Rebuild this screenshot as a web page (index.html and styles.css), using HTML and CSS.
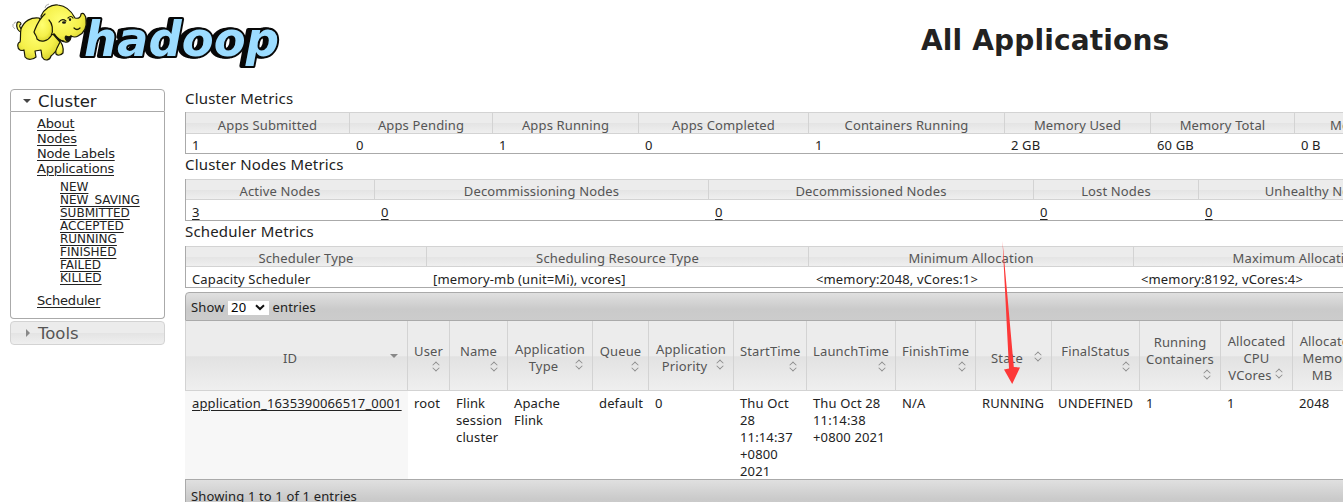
FILE: index.html
```html
<!DOCTYPE html>
<html lang="en">
<head>
<meta charset="utf-8">
<title>All Applications</title>
<link rel="stylesheet" href="styles.css">
</head>
<body>
<header class="top">
  <svg class="logo" width="285" height="76" viewBox="0 0 285 76">
    <defs>
      <radialGradient id="skin" cx="45%" cy="40%" r="65%">
        <stop offset="0" stop-color="#ffff72"/><stop offset=".65" stop-color="#f5f04a"/><stop offset="1" stop-color="#d5d02a"/>
      </radialGradient>
    </defs>
    <text class="word" font-size="48" x="84" y="56" textLength="195" lengthAdjust="spacingAndGlyphs">hadoop</text>
    <g fill="url(#skin)" stroke="#1a1a08" stroke-width="1.2" stroke-linejoin="round" stroke-linecap="round">
      <path d="M22 33C18 31 16 27 17 23C18 21 21 22 21 24C19 25 19 28 23 30"/>
      <path d="M55 46L56 54C58 56 61 55 63 53C64 48 62 42 58 39Z"/>
      <path d="M39 18C31 17 24 21 21 29C20 34 21 39 20 42C17 43 17 48 20 50C22 51 24 50 24 50L25 57C28 61 34 59 36 57L35 51L41 50L42 57C45 62 50 60 51 56C53 54 56 53 57 48L60 42Z"/>
      <path d="M41 16C44 9 51 4 58 5C67 6 72 12 75 18C79 19 81 17 81 14C83 12 86 15 86 20C87 27 84 33 78 36C75 38 73 37 71 36C70 40 69 43 65 42C59 41 57 37 54 34L46 37Z"/>
      <path d="M45 14C38 20 36 27 34 32C35 35 37 36 37 39C41 43 48 41 51 36C54 30 52 23 49 20"/>
      <path d="M66 36C68 37 70 37 71 36C71 39 70 42 67 41C65 39 65 37 66 36Z" fill="#151515"/>
      <path d="M59 22Q62 18 66 21M68 18Q71 15 73 18M74 28Q77 31 80 28M54 34C57 38 61 41 64 41" fill="none"/>
      <ellipse cx="64" cy="22.5" rx="2" ry="1.2" fill="#171717" stroke="none"/><ellipse cx="70" cy="19.500" rx="1.1" ry="1.500" fill="#171717" stroke="none"/>
    </g>
    <path d="M13 24Q12 27 15 29M16 22Q14 22 14 24M45 8Q45 5 49 4" fill="none" stroke="#999" stroke-width=".8"/>
  </svg>
  <h1>All Applications</h1>
</header>
<div class="page">
  <nav class="side">
    <h3 class="fold open"><i class="tri down"></i>Cluster</h3>
    <div class="panel">
      <a>About</a><a>Nodes</a><a>Node Labels</a><a>Applications</a>
      <div class="states"><a>NEW</a><a>NEW_SAVING</a><a>SUBMITTED</a><a>ACCEPTED</a><a>RUNNING</a><a>FINISHED</a><a>FAILED</a><a>KILLED</a></div>
      <a>Scheduler</a>
    </div>
    <h3 class="fold shut"><i class="tri right"></i>Tools</h3>
  </nav>
  <main>
    <h2>Cluster Metrics</h2>
    <div class="metrics cluster">
      <b>Apps Submitted</b><b>Apps Pending</b><b>Apps Running</b><b>Apps Completed</b><b>Containers Running</b><b>Memory Used</b><b>Memory Total</b><b>Memory Reserved</b>
      <span>1</span><span>0</span><span>1</span><span>0</span><span>1</span><span>2 GB</span><span>60 GB</span><span>0 B</span>
    </div>
    <h2>Cluster Nodes Metrics</h2>
    <div class="metrics nodes">
      <b>Active Nodes</b><b>Decommissioning Nodes</b><b>Decommissioned Nodes</b><b>Lost Nodes</b><b>Unhealthy Nodes</b>
      <span><a>3</a></span><span><a>0</a></span><span><a>0</a></span><span><a>0</a></span><span><a>0</a></span>
    </div>
    <h2>Scheduler Metrics</h2>
    <div class="metrics sched">
      <b>Scheduler Type</b><b>Scheduling Resource Type</b><b>Minimum Allocation</b><b>Maximum Allocation</b>
      <span>Capacity Scheduler</span><span>[memory-mb (unit=Mi), vcores]</span><span>&lt;memory:2048, vCores:1&gt;</span><span>&lt;memory:8192, vCores:4&gt;</span>
    </div>
    <div class="bar">Show <span class="select">20<svg width="10" height="7" viewBox="0 0 10 7"><path d="M1 1.2L5 5L9 1.2" fill="none" stroke="#111" stroke-width="2"/></svg></span> entries</div>
    <div class="apps heads">
      <div><p>ID<i class="sort one"></i></p></div>
      <div class="drop"><p>User<i class="sort"></i></p></div>
      <div class="drop"><p>Name<i class="sort"></i></p></div>
      <div><p>Application<br>Type<i class="sort"></i></p></div>
      <div class="drop"><p>Queue<i class="sort"></i></p></div>
      <div><p>Application<br>Priority<i class="sort"></i></p></div>
      <div class="drop"><p>StartTime<i class="sort"></i></p></div>
      <div class="drop"><p>LaunchTime<i class="sort"></i></p></div>
      <div class="drop"><p>FinishTime<i class="sort"></i></p></div>
      <div><p>State<i class="sort"></i></p></div>
      <div class="drop"><p>FinalStatus<i class="sort"></i></p></div>
      <div class="drop tall"><p>Running<br>Containers<i class="sort"></i></p></div>
      <div><p>Allocated<br>CPU<br>VCores<i class="sort"></i></p></div>
      <div><p>Allocated<br>Memory<br>MB<i class="sort"></i></p></div>
    </div>
    <div class="apps row">
      <div><a>application_1635390066517_0001</a></div><div>root</div><div>Flink<br>session<br>cluster</div><div>Apache<br>Flink</div><div>default</div><div>0</div>
      <div>Thu Oct<br>28<br>11:14:37<br>+0800<br>2021</div><div>Thu Oct 28<br>11:14:38<br>+0800 2021</div><div>N/A</div><div>RUNNING</div><div>UNDEFINED</div><div>1</div><div>1</div><div>2048</div>
    </div>
    <div class="bar foot">Showing 1 to 1 of 1 entries</div>
  </main>
</div>
<svg class="arrow" width="20" height="144" viewBox="0 0 20 144"><path d="M2.500 0L13.800 126L20 126.500L12.200 143L4 128.500L9 127.500Z" fill="#fd3838"/></svg>
</body>
</html>
```
FILE: styles.css
```css
* { box-sizing: border-box; }
body { margin: 0; width: 1343px; height: 502px; overflow: hidden; position: relative; background: #fff; color: #222; font: 13px/17px "Noto Sans", sans-serif; letter-spacing: .14px; }
h1, h2, h3, p { margin: 0; font-weight: normal; }
a { text-decoration: underline; text-underline-offset: 2px; text-decoration-thickness: 1px; }

.top { height: 89px; display: flex; }
.logo { flex: none; letter-spacing: 0; }
.word { font-family: "DejaVu Sans", sans-serif; font-weight: bold; font-style: italic; fill: #9cdcff; stroke: #080808; stroke-width: 4px; stroke-linejoin: round; paint-order: stroke; filter: drop-shadow(-2px 0 0 #080808) drop-shadow(-2px 0 0 #080808); }
.top h1 { padding: 21px 0 0 636px; font: bold 28px/40px "DejaVu Sans", sans-serif; letter-spacing: .15px; white-space: nowrap; }

.page { display: flex; }
.side { width: 155px; margin: 0 20px 0 10px; flex: none; font: 13px/15px "DejaVu Sans", sans-serif; letter-spacing: -.2px; }
.side a { display: block; width: max-content; }
.fold { display: flex; align-items: center; height: 23px; border: 1px solid #aaa; font-size: 16.500px; letter-spacing: 0; padding: 1px 0 0 27px; position: relative; }
.open { border-radius: 4px 4px 0 0; color: #212121; }
.shut { height: 24px; margin-top: 2px; padding-top: 0; border-color: #d3d3d3; border-radius: 4px; color: #555; background: linear-gradient(#ececec 50%, #e4e4e4 52%, #efefef); }
.tri { position: absolute; border: 4px solid transparent; }
.down { left: 12px; top: 9px; border-top-color: #454545; border-bottom: 0; }
.right { left: 15px; top: 7px; border-left-color: #888; border-right: 0; }
.panel { height: 207px; border: 1px solid #aaa; border-top: 0; border-radius: 0 0 4px 4px; padding: 4px 0 0 26px; }
.states { margin: 5px 0 8px 23px; font-size: 12px; line-height: 13px; letter-spacing: 0; }

main { width: 1158px; overflow: hidden; }
h2 { font-size: 15px; letter-spacing: .17px; line-height: 18px; height: 23px; }
.metrics + h2 { height: 25px; line-height: 20px; }
.metrics { display: grid; border-left: 1px solid #aaa; border-bottom: 1px solid #aaa; white-space: nowrap; }
.metrics b { font-weight: normal; color: #555; text-align: center; border: 1px solid #d3d3d3; border-left: 0; background: linear-gradient(#ececec 50%, #e4e4e4 52%, #efefef); line-height: 22px; overflow: hidden; }
.metrics span { padding-left: 6px; line-height: 25px; overflow: hidden; }
.cluster { grid-template: 22px 19px / 164px 143px 146px 170px 196px 146px 144px 184px; width: 1294px; }
.cluster b { line-height: 24px; }
.cluster span { line-height: 23px; }
.nodes { grid-template: 21px 20px / 189px 334px 325px 165px 240px; width: 1254px; }
.sched { grid-template: 21px 20px / 241px 382px 325px 326px; width: 1275px; }
.sched span:nth-of-type(n+3) { padding-left: 7px; }

.bar { width: 1400px; height: 29px; display: flex; align-items: center; white-space: pre; margin-top: 4px; padding: 2px 0 0 5px; border: 1px solid #aaa; border-top-left-radius: 4px; background: linear-gradient(#e0e0e0, #cacaca 60%, #ccc); }
.select { display: flex; align-items: center; justify-content: space-between; width: 41px; height: 14px; padding: 0 4px 0 3px; background: #fff; color: #000; }
.foot { height: 34px; margin: 0; padding-top: 0; border-radius: 0; }

.apps { display: grid; grid-template-columns: 223px 42px 58px 85px 56px 85px 73px 89px 80px 76px 88px 81px 72px 72px; width: 1280px; white-space: nowrap; }
.heads { height: 70px; color: #555; }
.heads div { display: flex; align-items: center; border-right: 1px solid #d3d3d3; border-bottom: 1px solid #d3d3d3; padding: 5px 6px 0; background: linear-gradient(#ececec 50%, #e2e2e2 52%, #efefef); }
.heads div:first-child { border-left: 1px solid #d3d3d3; }
.heads p { width: 100%; text-align: center; display: flow-root; }
.heads div.drop { padding: 1px 6px 0; }
.heads div.tall { padding-top: 0; }
.heads .drop p { display: block; }
.sort { float: right; width: 13px; height: 14px; margin-top: -2px; position: relative; }
.drop .sort { float: none; display: block; margin-left: auto; height: 11px; }
.sort::before, .sort::after { content: ""; position: absolute; left: 3px; width: 5px; height: 5px; border: solid #8c8c8c; border-width: 1.500px 0 0 1.500px; transform: scale(.86, .8) rotate(45deg); }
.sort::before { top: 4px; }
.sort::after { top: 7px; transform: scale(.86, .8) rotate(225deg); }
.sort.one::after { display: none; }
.sort.one::before { border: 4px solid transparent; border-top-color: #888; border-bottom: 0; width: 0; height: 0; transform: none; top: 6px; left: 2px; }
.row { height: 88px; }
.row div { padding: 4px 0 0 6px; height: 88px; }
.row div:first-child { background: #f7f7f7; padding-left: 7px; }

.arrow { position: absolute; left: 1000px; top: 241px; }
```
